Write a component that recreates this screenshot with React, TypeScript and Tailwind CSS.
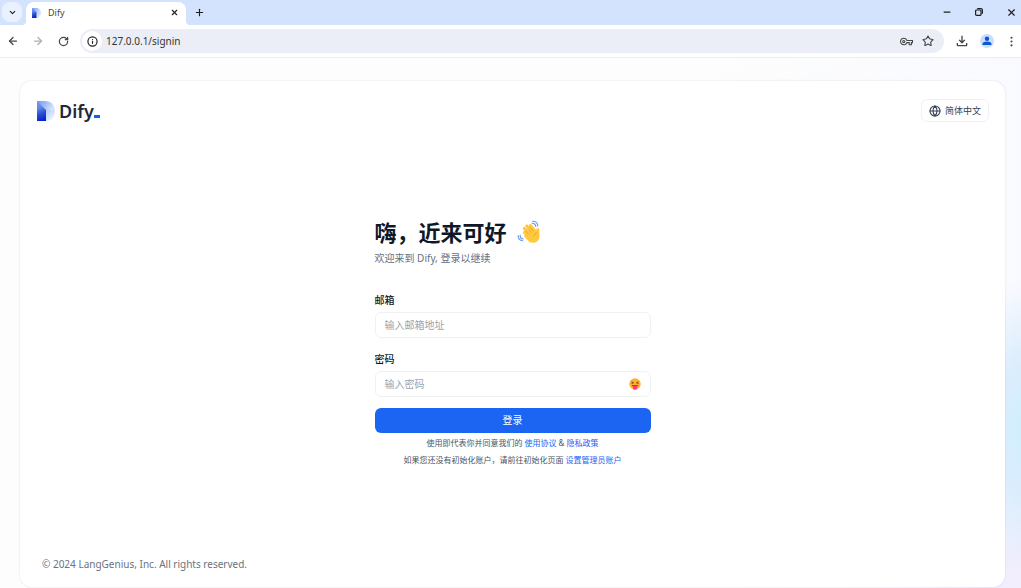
import { useState, type ReactNode } from 'react'
import { ArrowLeft, ArrowRight, ChevronDown, EllipsisVertical, Globe, Info, Minus, Plus, RotateCw, Star, X } from 'lucide-react'
import { MdOutlineFileDownload, MdOutlineVpnKey } from 'react-icons/md'

function DifyMark({ id, className }: { id: string; className: string }) {
  return (
    <svg viewBox="0 0 18 20" className={className} aria-hidden="true">
      <defs>
        <linearGradient id={id + '-top'} x1="0" y1="0" x2="1" y2="0.3">
          <stop offset="0" stopColor="#7399ee" />
          <stop offset="0.55" stopColor="#a3bff8" />
          <stop offset="1" stopColor="#d6e5fd" />
        </linearGradient>
        <linearGradient id={id + '-stem'} x1="0.2" y1="0" x2="0.4" y2="1">
          <stop offset="0" stopColor="#7399ee" />
          <stop offset="0.35" stopColor="#6088e8" />
          <stop offset="0.65" stopColor="#2c4fd6" />
          <stop offset="1" stopColor="#0824c8" />
        </linearGradient>
        <linearGradient id={id + '-bowl'} x1="0" y1="0" x2="0.8" y2="1">
          <stop offset="0" stopColor="#b4ccfa" />
          <stop offset="1" stopColor="#f3f8ff" />
        </linearGradient>
      </defs>
      <path d="M0 0h8c6 0 10 4 10 10H9L0 3z" fill={`url(#${id}-top)`} />
      <path d="M9 9.500h9C18 16 14 20 9 20z" fill={`url(#${id}-bowl)`} />
      <path d="M0 0l9 9v11H0z" fill={`url(#${id}-stem)`} />
    </svg>
  )
}

function WavingHand() {
  return (
    <svg viewBox="0 0 24 24" className="h-6 w-6" aria-label="wave" role="img">
      <g fill="none" stroke="#5f9df7" strokeWidth="1.1" strokeLinecap="round">
        <path d="M15 3.2c2-.2 3.600 1.200 3.800 3.300" />
        <path d="M15.500 1.200c3-.2 5.300 1.800 5.300 4.800" />
        <path d="M3.200 15.200c-.2 2 1.200 3.500 3 3.800" />
        <path d="M1.200 15.500c-.2 3 1.800 5 4.600 5.300" />
      </g>
      <g fill="none" stroke="#ffc83d" strokeWidth="3.1" strokeLinecap="round">
        <path d="M7.400 12.500l6 6" />
        <path d="M7.300 8.500l7 7" />
        <path d="M9.700 6l7 7" />
        <path d="M13.300 5.600l5 6" />
        <path d="M20.800 9.500v6" />
      </g>
      <path d="M8.500 13.500l7.500-6 3.500 3.500 2.800 3c.9 4-.9 8-5 8.700-3 .5-5.500-.8-7-2.700l-3.300-4z" fill="#ffc83d" />
      <path d="M8.700 11.200l2.700 2.700M10.300 8.800l3.500 3.500M13 7.200l3.200 3.400M20 12.500c-1.700.4-2.700 1.600-2.700 3.200" fill="none" stroke="#e08e0b" strokeWidth=".6" strokeLinecap="round" />
    </svg>
  )
}

function TongueFace() {
  return (
    <svg viewBox="0 0 12 12" className="h-3 w-3" aria-hidden="true">
      <circle cx="6" cy="6" r="5.700" fill="#ffb02e" />
      <path d="M2.500 3.800l2 1-2 .9M9.500 3.800l-2 1 2 .9" fill="none" stroke="#402a32" strokeWidth=".7" />
      <path d="M3 7h6c-.2 1.400-1.300 2.300-3 2.300S3.200 8.400 3 7z" fill="#bb1d50" />
      <path d="M4 7.400h4v2.400a2 2 0 0 1-4 0z" fill="#ff2f9b" />
    </svg>
  )
}

function RestoreIcon() {
  return (
    <svg viewBox="0 0 8 8" className="h-2 w-2" fill="none" stroke="currentColor" strokeWidth="1.2" aria-hidden="true">
      <rect x=".6" y="2" width="5.400" height="5.400" rx="1" />
      <path d="M2.200.600h3.700a1.500 1.500 0 0 1 1.500 1.500v3.700" />
    </svg>
  )
}

function ProfileIcon() {
  return (
    <svg viewBox="0 0 14 14" className="h-3.5 w-3.5" aria-hidden="true">
      <circle cx="7" cy="7" r="7" fill="#c9defc" />
      <circle cx="7" cy="4.700" r="2.200" fill="#0b57d0" />
      <path d="M2.500 11V9.900c0-1.600 2.700-2.300 4.500-2.300s4.500.7 4.500 2.300V11z" fill="#0b57d0" />
    </svg>
  )
}

function IconButton({ label, className = '', children }: { label: string; className?: string; children: ReactNode }) {
  return <button type="button" aria-label={label} className={`grid h-5 w-5 shrink-0 place-items-center rounded-full ${className}`}>{children}</button>
}

function BrowserBar() {
  return (
    <div className="shrink-0 text-[#474747]">
      <div className="flex h-[25px] items-center bg-[#d3e3fd] pb-px text-[#1f1f1f]">
        <IconButton label="Search tabs" className="ml-0.5 rounded-lg bg-[#e9f1fe]"><ChevronDown size={9} strokeWidth={3} /></IconButton>
        <span className="-mb-px h-1 w-1 self-end bg-[radial-gradient(circle_at_0_0,#d3e3fd_4px,#fff_4px)]" />
        <div className="-mb-px flex h-[23px] w-40 items-center self-end rounded-t-lg bg-white pb-0.5 pl-1.5 pr-0.5">
          <DifyMark id="tab" className="h-2.5 w-[9px]" />
          <span className="ml-[7px] flex-1 text-[9px] text-[#474747]">Dify</span>
          <IconButton label="Close tab"><X size={9} strokeWidth={3} /></IconButton>
        </div>
        <span className="-mb-px h-1 w-1 self-end bg-[radial-gradient(circle_at_100%_0,#d3e3fd_4px,#fff_4px)]" />
        <IconButton label="New tab" className="-ml-px"><Plus size={11} strokeWidth={2.500} /></IconButton>
        <div className="ml-auto flex gap-3">
          <IconButton label="Minimize"><Minus size={10} strokeWidth={3} /></IconButton>
          <IconButton label="Restore"><RestoreIcon /></IconButton>
          <IconButton label="Close"><X size={11} strokeWidth={2.500} /></IconButton>
        </div>
      </div>
      <div className="flex h-[33px] items-center border-b border-[#ececec] bg-white pr-1 pl-[3px]">
        <div className="flex gap-[5px]">
          <IconButton label="Back"><ArrowLeft size={12} strokeWidth={2.500} /></IconButton>
          <IconButton label="Forward" className="text-[#b0b0b0]"><ArrowRight size={12} strokeWidth={2.500} /></IconButton>
          <IconButton label="Reload"><RotateCw size={11} strokeWidth={2.750} /></IconButton>
        </div>
        <div className="ml-[7px] flex h-6 flex-1 items-center rounded-full bg-[#ebeef7] px-0.5">
          <IconButton label="Site information" className="bg-white text-[#1f1f1f]"><Info size={11} strokeWidth={2.500} /></IconButton>
          <input aria-label="Address" defaultValue="127.0.0.1/signin" className="ml-1 min-w-0 flex-1 bg-transparent text-[10px] text-[#333] outline-none" />
          <IconButton label="Passwords"><MdOutlineVpnKey size={13} /></IconButton>
          <IconButton label="Bookmark" className="mr-1 ml-0.5"><Star size={12} strokeWidth={2.250} /></IconButton>
        </div>
        <IconButton label="Downloads" className="ml-2"><MdOutlineFileDownload size={16} /></IconButton>
        <IconButton label="Profile" className="ml-[5px]"><ProfileIcon /></IconButton>
        <IconButton label="Menu" className="-mr-1 ml-1"><EllipsisVertical size={13} strokeWidth={2} /></IconButton>
      </div>
    </div>
  )
}

const fieldClass = 'block h-[26px] w-full rounded-md border border-[#f0f1f3] bg-white pl-[9px] pr-8 text-[10px] text-gray-900 outline-none placeholder:text-[#9ca3af]'

function SignInForm() {
  const [email, setEmail] = useState('')
  const [password, setPassword] = useState('')
  const [shown, setShown] = useState(false)
  return (
    <div className="w-[276px]">
      <h1 className="flex items-center text-[22px] leading-7 font-bold text-[#101828]">嗨，近来可好<span className="ml-2.5"><WavingHand /></span></h1>
      <p className="mt-1 text-[10px] leading-4 text-[#667085]">欢迎来到 Dify, 登录以继续</p>
      <form className="mt-[26px]" onSubmit={e => e.preventDefault()}>
        <label htmlFor="email" className="block text-[10px] leading-4 font-medium text-[#101828]">邮箱</label>
        <input id="email" type="email" value={email} onChange={e => setEmail(e.target.value)} placeholder="输入邮箱地址" className={`mt-1 ${fieldClass}`} />
        <label htmlFor="password" className="mt-[13px] block text-[10px] leading-4 font-medium text-[#101828]">密码</label>
        <div className="relative mt-1">
          <input id="password" type={shown ? 'text' : 'password'} value={password} onChange={e => setPassword(e.target.value)} placeholder="输入密码" className={fieldClass} />
          <button type="button" aria-label="Toggle password" onClick={() => setShown(!shown)} className="absolute inset-y-0 right-2.5 grid place-items-center"><TongueFace /></button>
        </div>
        <button type="submit" className="mt-[11px] block h-[25px] w-full rounded-md bg-[#1c64f2] text-[10px] text-white">登录</button>
      </form>
      <p className="mt-0.5 text-center text-[8px] leading-4 text-[#4b5563]">使用即代表你并同意我们的 <a href="#terms" className="text-[#1c64f2]">使用协议</a> &amp; <a href="#privacy" className="text-[#1c64f2]">隐私政策</a></p>
      <p className="mt-px text-center text-[8px] leading-4 text-[#4b5563]">如果您还没有初始化账户，请前往初始化页面 <a href="#install" className="text-[#1c64f2]">设置管理员账户</a></p>
    </div>
  )
}

export default function App() {
  return (
    <div className="flex min-h-screen flex-col bg-white font-['Noto_Sans','Noto_Sans_CJK_SC',sans-serif]">
      <BrowserBar />
      <main className="flex flex-1 bg-[radial-gradient(ellipse_50px_150px_at_100%_70%,#d0effd_0%,#dcedfd_45%,transparent_100%),radial-gradient(ellipse_120px_170px_at_100%_100%,#f3eefd_20%,transparent_100%),linear-gradient(90deg,#fdfdfd_70%,#f9faff)] pt-[23px] pr-4 pb-px pl-5">
        <div className="flex flex-1 flex-col rounded-xl bg-white shadow-[0_0_2px_#10182826]">
          <header className="flex items-center justify-between pt-[18px] pr-4 pl-[17px]">
            <a href="#home" aria-label="Dify" className="flex items-center">
              <DifyMark id="logo" className="h-5 w-[18px]" />
              <span className="ml-1 text-[18px] leading-5 font-semibold text-[#1d2939]">Dify</span>
              <span className="mt-3 h-[3px] w-1.5 bg-[#155eef]" />
            </a>
            <button type="button" className="flex h-[23px] items-center gap-1 rounded-md border border-[#f0f1f3] px-[7px] text-[9px] text-[#344054]"><Globe size={12} strokeWidth={2.250} />简体中文</button>
          </header>
          <div className="flex flex-1 justify-center pt-24">
            <SignInForm />
          </div>
          <footer className="px-[22px] pb-[15px] text-[10px] leading-4 text-[#6b7280]">© 2024 LangGenius, Inc. All rights reserved.</footer>
        </div>
      </main>
    </div>
  )
}
